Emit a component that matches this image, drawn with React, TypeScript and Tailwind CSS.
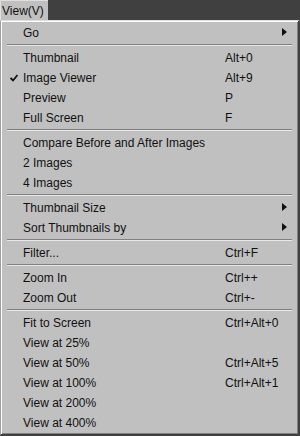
import { Fragment } from 'react'

type Item =
  | { type: 'sep' }
  | { type: 'item'; label: string; shortcut?: string; checked?: boolean; submenu?: boolean }

const items: Item[] = [
  { type: 'item', label: 'Go', submenu: true },
  { type: 'sep' },
  { type: 'item', label: 'Thumbnail', shortcut: 'Alt+0' },
  { type: 'item', label: 'Image Viewer', shortcut: 'Alt+9', checked: true },
  { type: 'item', label: 'Preview', shortcut: 'P' },
  { type: 'item', label: 'Full Screen', shortcut: 'F' },
  { type: 'sep' },
  { type: 'item', label: 'Compare Before and After Images' },
  { type: 'item', label: '2 Images' },
  { type: 'item', label: '4 Images' },
  { type: 'sep' },
  { type: 'item', label: 'Thumbnail Size', submenu: true },
  { type: 'item', label: 'Sort Thumbnails by', submenu: true },
  { type: 'sep' },
  { type: 'item', label: 'Filter...', shortcut: 'Ctrl+F' },
  { type: 'sep' },
  { type: 'item', label: 'Zoom In', shortcut: 'Ctrl++' },
  { type: 'item', label: 'Zoom Out', shortcut: 'Ctrl+-' },
  { type: 'sep' },
  { type: 'item', label: 'Fit to Screen', shortcut: 'Ctrl+Alt+0' },
  { type: 'item', label: 'View at 25%' },
  { type: 'item', label: 'View at 50%', shortcut: 'Ctrl+Alt+5' },
  { type: 'item', label: 'View at 100%', shortcut: 'Ctrl+Alt+1' },
  { type: 'item', label: 'View at 200%' },
  { type: 'item', label: 'View at 400%' },
]

function Check() {
  return (
    <svg width="8" height="8" viewBox="0 0 8 8" className="absolute left-[8px] top-[7px]">
      <path d="M0.5 4 L3 6.5 L7.5 1" fill="none" stroke="#111" strokeWidth={1.8} />
    </svg>
  )
}

function Arrow() {
  return (
    <svg width="5" height="8" viewBox="0 0 5 8" className="absolute left-[280px] top-[6px]">
      <path d="M0 0 L5 4 L0 8 Z" fill="#111" />
    </svg>
  )
}

export default function App() {
  return (
    <div className="w-[300px] h-[436px] bg-[#404040] font-['Liberation_Sans',Arial,sans-serif] text-[12px] text-[#111] leading-none">
      {/* Menu bar */}
      <div className="h-[20px] flex">
        <div className="w-[48px] h-[20px] bg-[#c0c0c0] border-l border-t border-[#dfdfdf] flex items-center pl-[1px] pt-[1px]">
          View(V)
        </div>
      </div>

      {/* Dropdown */}
      <div className="h-[416px] bg-[#c0c0c0] border-t border-l border-t-[#dfdfdf] border-l-[#a0a0a0] border-r-2 border-b-2 border-r-[#404040] border-b-[#404040] pt-[1px] pl-[1px] pr-[1px] pb-[2px] shadow-[inset_1px_1px_0_#ffffff,inset_-1px_-1px_0_#808080]">
        {items.map((it, i) => (
          <Fragment key={i}>
            {it.type === 'sep' ? (
              <div className="h-[5px] pt-[2px] px-[5px]">
                <div className="h-[2px] border-t border-b border-t-[#808080] border-b-[#e8e8e8]" />
              </div>
            ) : (
              <div className="relative h-[20px] flex items-center pl-[21px] pt-[2px]">
                {it.checked && <Check />}
                <span className="w-[202px] whitespace-nowrap">{it.label}</span>
                {it.shortcut && <span className="whitespace-nowrap">{it.shortcut}</span>}
                {it.submenu && <Arrow />}
              </div>
            )}
          </Fragment>
        ))}
      </div>
    </div>
  )
}
